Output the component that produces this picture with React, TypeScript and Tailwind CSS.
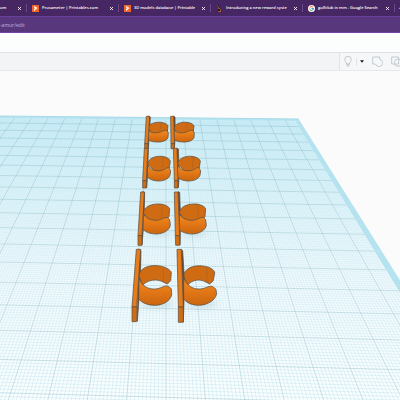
import React from 'react';
import { X } from 'lucide-react';

type TabIcon = 'printables' | 'figure' | 'google';

interface Tab {
  title: string;
  icon: TabIcon;
}

const tabs: Tab[] = [
  { title: 'Prusameter | Printables.com', icon: 'printables' },
  { title: '3D models database | Printable', icon: 'printables' },
  { title: 'Introducing a new reward syste', icon: 'figure' },
  { title: 'golfclub in mm - Google Search', icon: 'google' },
];

const Favicon: React.FC<{ icon: TabIcon }> = ({ icon }) => {
  if (icon === 'google') {
    return (
      <svg viewBox="0 0 14 14" className="h-[7px] w-[7px] shrink-0" aria-hidden="true">
        <circle cx="7" cy="7" r="7" fill="#fff" />
        <g fill="none" strokeWidth="2">
          <path d="M3.8 4.6A4 4 0 0 1 9.8 4.1" stroke="#ea4335" />
          <path d="M3.8 4.6A4 4 0 0 0 3.8 9.4" stroke="#fbbc05" />
          <path d="M3.8 9.4A4 4 0 0 0 9.6 10" stroke="#34a853" />
          <path d="M7 7H11A4 4 0 0 1 9.6 10" stroke="#4285f4" />
        </g>
      </svg>
    );
  }
  if (icon === 'figure') {
    return (
      <svg viewBox="0 0 14 14" className="h-[7px] w-[7px] shrink-0" aria-hidden="true">
        <path d="M2 0H6L7 5L10 8L11 14H3L4 8Z" fill="#24152f" />
        <path d="M3 1L5 5L4 8M6 6L9 9V13M4 13H10" fill="none" stroke="#c8703a" strokeWidth="1.6" />
      </svg>
    );
  }
  return (
    <svg viewBox="0 0 14 14" className="h-[7px] w-[7px] shrink-0" aria-hidden="true">
      <rect width="14" height="14" rx="1" fill="#f4652b" />
      <path d="M4 2L11 6L4 12V8L7 6L4 5Z" fill="#fff" />
    </svg>
  );
};

const CloseButton: React.FC<{ label: string }> = ({ label }) => (
  <button type="button" aria-label={label} className="shrink-0 text-white">
    <X className="h-[5px] w-[5px]" strokeWidth={4} />
  </button>
);

// Workplane: lines run to a horizon at HORIZON, columns meet above CENTER
const HORIZON = -92;
const CENTER = 166;
const COLUMN = 0.0801;
const TILT = 0.000057;
const EDGE = 7.85;
const INNER_EDGE = 7.6;

const depth = (row: number) => 1 / (0.002063 + 0.0001523 * row);
const yAt = (row: number, x: number) => HORIZON + depth(row) * (1 + TILT * x);
const xAt = (col: number, y: number) => CENTER + col * COLUMN * (y - HORIZON);

const columnPath = (col: number) => `M${xAt(col, 116)} 116L${xAt(col, 402)} 402`;
const rowPath = (row: number) => `M0 ${yAt(row, 0)}L420 ${yAt(row, 420)}`;

const range = (from: number, to: number) => Array.from({ length: to - from + 1 }, (_, i) => from + i);

const majorPath = [...range(-19, 7).map(columnPath), ...range(-1, 17).map(rowPath)].join('');
const minorColumns = range(-190, 76).filter((n) => n % 10 !== 0).map((n) => columnPath(n / 10)).join('');
const minorRows = range(-8, 176).filter((n) => n % 10 !== 0).map((n) => rowPath(n / 10)).join('');

const planeShape = `M0 116L${xAt(EDGE, 119)} 119L${xAt(EDGE, 400)} 400H0Z`;
const innerShape = `M0 118L${xAt(INNER_EDGE, 121)} 121L${xAt(INNER_EDGE, 400)} 400H0Z`;

interface Ring {
  inner: string;
  crease: string;
  outer: string;
}

interface Clip {
  side: string;
  plate: string;
  foot: string;
  ring: Ring;
  shift: number;
}

const rings: Record<'first' | 'second' | 'third' | 'fourthLeft' | 'fourthRight', Ring> = {
  first: {
    inner: 'M54 71C55 56 76 50 94 52C106 54 113 59 114 63L112 80L100 86H70Z',
    crease: 'M93 53L92 74',
    outer: 'M54 71C56 81 68 85 83 83C97 81 99 74 110 76L115 83L114 98C109 109 92 112 79 111C66 110 59 108 54 104Z',
  },
  second: {
    inner: 'M53 178C54 160 76 152 96 154C111 156 120 163 121 169L118 188L105 198H75Z',
    crease: 'M99 155L98 187',
    outer: 'M53 178C56 193 74 199 92 197C106 195 108 186 117 188L122 198L120 211C115 224 98 229 82 228C67 227 58 222 52 216Z',
  },
  third: {
    inner: 'M70 84C71 65 96 55 121 57C137 59 148 66 149 72L147 95L135 107H90Z',
    crease: 'M126 58L125 99',
    outer: 'M70 84C73 98 91 106 108 106C125 106 129 96 142 97L149 104L151 120C149 137 129 146 110 147C91 147 76 141 69 133Z',
  },
  fourthLeft: {
    inner: 'M57 274C56 252 84 239 112 242C136 244 152 254 154 263L152 287L142 297L129 291C112 281 82 284 68 301Z',
    crease: 'M130 247L130 291',
    outer: 'M57 274C59 294 76 312 101 312C124 312 127 302 143 303L154 311L155 330C150 350 126 361 105 361C82 361 63 352 56 341Z',
  },
  fourthRight: {
    inner: 'M191 274C192 251 220 239 248 243C271 245 284 256 284 264L280 287L269 297L257 291C240 281 216 284 203 301Z',
    crease: 'M260 248L261 291',
    outer: 'M191 274C194 294 212 312 236 312C258 312 262 302 277 304L288 313L290 327C284 350 257 361 235 361C213 360 198 352 191 341Z',
  },
};

const nearClips: Clip[] = [
  {
    side: 'M68 20L74 22L72 110L66 180Z',
    plate: 'M62 21H73L66 152H54Z',
    foot: 'M54 152H66V181H54Z',
    ring: rings.third,
    shift: 0,
  },
  {
    side: 'M174 20L179 22L182 110L180 180Z',
    plate: 'M163 21H174L179 152H166Z',
    foot: 'M166 152H179V181H167Z',
    ring: rings.third,
    shift: 108,
  },
  {
    side: 'M56 193L63 197L61 292L52 409Z',
    plate: 'M49 193H62L50 366H36Z',
    foot: 'M36 366H51L50 410H36Z',
    ring: rings.fourthLeft,
    shift: 0,
  },
  {
    side: 'M184 193L188 197L194 292L190 411Z',
    plate: 'M171 193H184L190 366H175Z',
    foot: 'M175 366H190V412H175Z',
    ring: rings.fourthRight,
    shift: 0,
  },
];

const farClips: Clip[] = [
  {
    side: 'M55 33L61 36L58 94L55 130Z',
    plate: 'M49 34H59L54 116H44Z',
    foot: 'M44 116H54V131H44Z',
    ring: rings.first,
    shift: 0,
  },
  {
    side: 'M130 33L135 36L136 94L133 130Z',
    plate: 'M122 34H131L133 116H123Z',
    foot: 'M123 116H133V131H123Z',
    ring: rings.first,
    shift: 78,
  },
  {
    side: 'M49 130L55 132L53 208L50 248Z',
    plate: 'M43 130H54L49 227H38Z',
    foot: 'M38 227H49V249H38Z',
    ring: rings.second,
    shift: 0,
  },
  {
    side: 'M140 130L145 132L148 208L145 248Z',
    plate: 'M130 130H141L144 227H133Z',
    foot: 'M133 227H144V249H133Z',
    ring: rings.second,
    shift: 90,
  },
];

const ClipShape: React.FC<{ clip: Clip }> = ({ clip }) => (
  <g stroke="#5a5044" strokeWidth="2.2" strokeLinejoin="round">
    <path d={clip.side} fill="#654a38" />
    <g transform={`translate(${clip.shift} 0)`}>
      <path d={clip.ring.inner} fill="#cf6b13" />
      <path d={clip.ring.crease} fill="none" strokeWidth="1" strokeOpacity="0.6" />
      <path d={clip.ring.outer} fill="url(#clip-body)" />
    </g>
    <path d={clip.plate} fill="#e77c18" />
    <path d={clip.foot} fill="#d06c12" />
  </g>
);

const Workplane: React.FC = () => (
  <svg viewBox="0 71 400 329" className="block w-full" role="img" aria-label="Workplane with eight clips">
    <defs>
      <linearGradient id="plane-fill" gradientUnits="userSpaceOnUse" x1="0" y1="116" x2="0" y2="400">
        <stop offset="0" stopColor="#cdeef8" />
        <stop offset="0.25" stopColor="#e0f4fa" />
        <stop offset="0.55" stopColor="#f2fafd" />
        <stop offset="1" stopColor="#fafeff" />
      </linearGradient>
      <linearGradient id="minor-line" gradientUnits="userSpaceOnUse" x1="0" y1="116" x2="0" y2="400">
        <stop offset="0" stopColor="#8fcfe0" stopOpacity="0.12" />
        <stop offset="0.5" stopColor="#8fcfe0" stopOpacity="0.28" />
        <stop offset="1" stopColor="#84c8da" stopOpacity="0.45" />
      </linearGradient>
      <linearGradient id="clip-body" x1="0" y1="0" x2="0" y2="1">
        <stop offset="0.3" stopColor="#ec8119" />
        <stop offset="0.65" stopColor="#dc7214" />
        <stop offset="1" stopColor="#c9660f" />
      </linearGradient>
      <clipPath id="plane">
        <path d={planeShape} />
      </clipPath>
      <clipPath id="plane-inner">
        <path d={innerShape} />
      </clipPath>
      <filter id="soft" x="-50%" y="-50%" width="200%" height="200%">
        <feGaussianBlur stdDeviation="3" />
      </filter>
    </defs>

    <path d={planeShape} fill="#b8e4f0" />
    <path d={innerShape} fill="url(#plane-fill)" />
    <g clipPath="url(#plane)" fill="none" stroke="url(#minor-line)" strokeWidth="0.5">
      <path d={minorColumns} />
      <path d={minorRows} />
    </g>
    <path d={majorPath} clipPath="url(#plane-inner)" fill="none" stroke="#86b9c6" strokeWidth="0.6" strokeOpacity="0.7" />
    <path d={`M0 116L${xAt(EDGE, 119)} 119`} stroke="#a6dae8" strokeWidth="1" />

    <g fill="#8fb4c4" fillOpacity="0.35" filter="url(#soft)">
      <ellipse cx="157" cy="304" rx="16" ry="4" />
      <ellipse cx="201" cy="304" rx="16" ry="4" />
      <ellipse cx="159" cy="233" rx="13" ry="3" />
      <ellipse cx="194" cy="233" rx="13" ry="3" />
    </g>

    <g transform="translate(130 105) scale(0.3333)">
      {farClips.map((clip) => (
        <ClipShape key={clip.plate} clip={clip} />
      ))}
    </g>
    <g transform="translate(120 185) scale(0.3333)">
      {nearClips.map((clip) => (
        <ClipShape key={clip.plate} clip={clip} />
      ))}
    </g>
  </svg>
);

export default function App() {
  return (
    <div className="min-h-screen overflow-hidden bg-[#fbfbfc] font-['Open_Sans','Noto_Sans',sans-serif]">
      {/* Browser tabs */}
      <nav className="flex h-4 items-center overflow-hidden bg-[#472664] text-[4px] leading-4 font-semibold text-white">
        <div className="flex h-2 w-[27px] shrink-0 items-center justify-between border-r border-[#69498a] pr-1">
          <span>om</span>
          <CloseButton label="Close tab" />
        </div>
        {tabs.map((tab) => (
          <div key={tab.title} className="flex h-2 w-[92px] shrink-0 items-center border-r border-[#69498a] pr-1 pl-[5px]">
            <Favicon icon={tab.icon} />
            <a href="#" className="mr-1 ml-[3px] min-w-0 flex-1 whitespace-nowrap">
              {tab.title}
            </a>
            <CloseButton label={`Close ${tab.title}`} />
          </div>
        ))}
        <span className="ml-1 shrink-0">+</span>
      </nav>

      {/* Address bar */}
      <div className="flex h-[17px] items-center border-t border-b border-t-[#6b3fa0] border-b-[#7442a4] bg-[#58377c]">
        <input
          aria-label="Address"
          defaultValue="-amur/edit"
          className="w-full bg-transparent text-[5px] leading-4 text-[#c5b5d6] outline-none"
        />
      </div>

      {/* App header */}
      <div className="h-[19px] bg-[#fcfdfd]" />

      {/* Toolbar */}
      <div className="flex h-[19px] items-stretch justify-end border-t border-b border-t-[#dfe2e5] border-b-[#e6e8eb] bg-[#f3f4f6]">
        <div className="flex shrink-0 items-center overflow-hidden border-l border-[#e1e4e7] bg-[#f6f7f8] text-[#bcc5cb]">
          <button type="button" aria-label="Show all" className="flex w-4 justify-center">
            <svg viewBox="0 0 24 33" className="h-[11px] w-2" fill="none" stroke="currentColor" strokeWidth="2.6">
              <path d="M8 24C8 19 2 17 2 10A10 9 0 0 1 22 10C22 17 16 19 16 24Z" />
              <path d="M8 25H16L14 31H10Z" />
            </svg>
          </button>
          <button type="button" aria-label="Visibility options" className="flex h-2 w-[11px] items-center justify-center border-l border-[#dfe3e6]">
            <svg viewBox="0 0 8 5" className="h-[3px] w-1" fill="#15191c">
              <path d="M0 0H8L4 5Z" />
            </svg>
          </button>
          <button type="button" aria-label="Group" className="flex w-5 justify-center">
            <svg viewBox="0 0 33 33" className="h-[11px] w-[11px]" fill="none" stroke="currentColor" strokeWidth="2.6">
              <path d="M2 3H23V10A11 11 0 1 1 11 25L8 24H2Z" />
            </svg>
          </button>
          <button type="button" aria-label="Ungroup" className="flex w-[13px] overflow-hidden pl-1">
            <svg viewBox="0 0 33 33" className="h-[11px] w-[11px] shrink-0" fill="none" stroke="currentColor" strokeWidth="2.6">
              <path d="M10 24H2V3H23V9" />
              <circle cx="21" cy="20" r="11" />
              <path d="M11 24H23V10" />
            </svg>
          </button>
        </div>
      </div>

      <Workplane />
    </div>
  );
}
